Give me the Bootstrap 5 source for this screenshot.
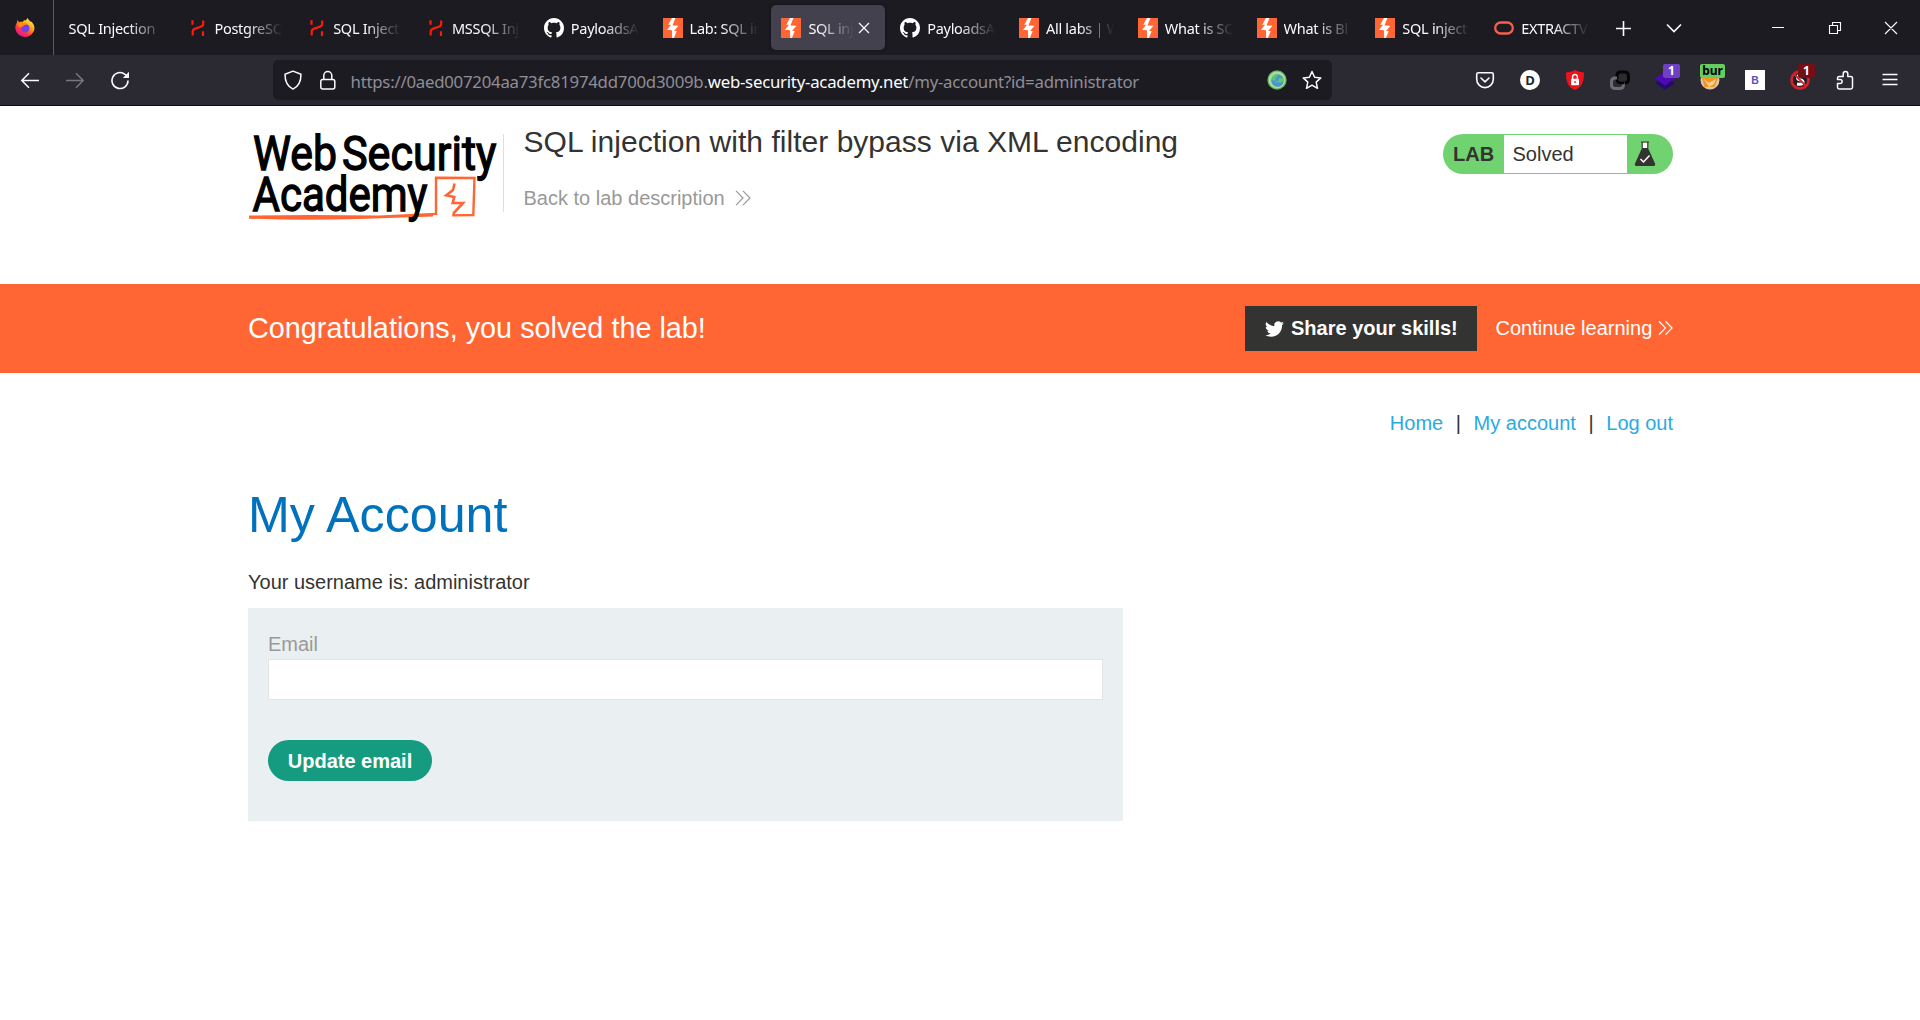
<!DOCTYPE html>
<html lang="en">
<head>
<meta charset="utf-8">
<title>SQL injection with filter bypass via XML encoding</title>
<link href="https://cdn.jsdelivr.net/npm/bootstrap@5.3.0/dist/css/bootstrap.min.css" rel="stylesheet">
<style>
body{font-family:"Liberation Sans",Arial,sans-serif;font-size:20px;line-height:24px;color:#333332;background:#fff;height:1020px;overflow:hidden}
svg{display:block;flex:none}
.chrome-ui{font-family:"Noto Sans","Open Sans",sans-serif;color:#fbfbfe}
.tabstrip{height:55px;background:#1c1b22}
.fx-button{width:54px;height:55px;border-right:1px solid #5b5a62;padding-left:15px}
.tabs-list{padding-left:4.6px;width:1548px}
.browser-tab{width:118.8px;flex:none}
.tab-inner{width:114px;height:45px;border-radius:5px;padding:0 10px;gap:7px}
.tab-inner.selected{background:#42414d;box-shadow:0 0 3px rgba(0,0,0,.5)}
.tab-label{font-size:14.5px;letter-spacing:-.28px;line-height:20px;overflow:hidden;white-space:nowrap;flex:1 1 0;margin-right:-1px;padding-top:1px;-webkit-mask-image:linear-gradient(to left,transparent,#000 36px);mask-image:linear-gradient(to left,transparent,#000 36px)}
.selected .tab-label{margin-right:-5px}
.tab-close{margin-right:3px}
.win-controls{padding-left:8px}
.toolbar-row{height:51px;background:#2b2a33;border-bottom:1px solid #0c0c0d;padding-left:20px}
.nav-icons{gap:25px;width:253px}
.urlbar{width:1059px;height:40px;border-radius:5px;background:#1c1b22;padding:0 10px}
.url-text{font-size:16.8px;letter-spacing:-.24px;color:#8f8e96;line-height:24px;padding:3px 0 0 13.5px;white-space:nowrap}
.url-text b{font-weight:400;color:#fbfbfe}
.star-icon{margin-left:15px}
.ext-icons{gap:25px;margin-left:143px}
.ext-badge{position:absolute;top:-6px;left:8px;width:17px;height:14px;border-radius:2px;font:700 12px/14px "Noto Sans",sans-serif;text-align:center;color:#fff}
.badge-violet{background:#6f3fc4}
.badge-maroon{background:#721016}
.badge-green{background:#66cd61;color:#000;width:25px;left:0}
.page-wrap{width:1425px;margin-left:248px}
.lab-header{height:178px;padding-top:17px}
.logo-box{width:256px;height:78px;margin-top:11px;border-right:1px solid #dedede}
.logo-box svg{overflow:visible}
.lab-title{font-size:30px;line-height:36px;font-weight:400;letter-spacing:.03px;margin:1px 0 0}
.lab-head-text{margin-left:19.5px}
.back-link{color:#999;margin-top:26px;gap:10px}
.lab-status{width:230px;height:40px;margin-top:11px;border-radius:20px;background:#70d36f;padding:1px 0 1px 10px;overflow:hidden}
.lab-status strong{width:51px}
.lab-state{width:123px;height:38px;background:#fff;padding-left:8.5px}
.flask{margin-left:7px}
.solved-banner{background:#ff6633;height:89px;color:#fff}
.banner-message{font-size:28.8px;line-height:36px;padding-bottom:2px}
.share-btn,.share-btn:hover{width:232px;height:45px;border-radius:0;background:#333332;color:#fff;font-size:20px;font-weight:700;line-height:24px;padding:0 0 1px 20px;gap:7px;border:0}
.continue-link{width:177.5px;margin-left:18.5px;padding-bottom:1px}
.top-links{padding-top:38px}
.top-links a{text-decoration:none;color:#29abe2}
.top-links span{padding:0 12.6px}
.acct-title{font-size:50.2px;line-height:60px;font-weight:400;color:#0071bc;margin:50px 0 25px}
.email-form{width:875px;height:213px;background:#eaeff2;padding:24px 20px;margin-top:14px}
.email-form label{color:#999;display:block;line-height:24px;margin-bottom:3px}
.email-form .form-control{height:41px;border-radius:0;border:1px solid #e4e4e4;padding:0}
.update-btn{margin-top:40px;width:164px;height:41px;border-radius:20.5px;background:#159c80;color:#fff;font-weight:700;font-size:20px;line-height:24px;padding:0;border:0}
</style>
<script src="https://cdn.jsdelivr.net/npm/bootstrap@5.3.0/dist/js/bootstrap.bundle.min.js"></script>
</head>
<body>
<svg width="0" height="0" class="position-absolute">
<defs>
<symbol id="hk" viewBox="0 0 20 20"><path d="M5.500 2.300v4.400M16.200 2.500v3.200q0 2.300-2.500 3l-5.400 1.900q-2.600.9-2.600 3v4M16 13.300v4.600" fill="none" stroke="#ff1a08" stroke-width="2.200"/></symbol>
<symbol id="gh" viewBox="0 0 16 16"><path fill="#fff" d="M8 0C3.580 0 0 3.580 0 8c0 3.540 2.290 6.530 5.470 7.590.4.070.55-.17.55-.38 0-.19-.01-.82-.01-1.490-2.010.37-2.530-.49-2.690-.94-.09-.23-.48-.94-.82-1.130-.28-.15-.68-.52-.01-.53.63-.01 1.080.58 1.230.82.72 1.210 1.870.87 2.330.66.07-.52.28-.87.51-1.070-1.780-.2-3.640-.89-3.640-3.950 0-.87.31-1.590.82-2.150-.08-.2-.36-1.020.08-2.120 0 0 .67-.21 2.200.82.64-.18 1.320-.27 2-.27s1.360.09 2 .27c1.530-1.040 2.200-.82 2.200-.82.44 1.100.16 1.920.08 2.120.51.56.82 1.270.82 2.150 0 3.070-1.870 3.750-3.650 3.950.29.25.54.73.54 1.480 0 1.070-.01 1.930-.01 2.200 0 .21.15.46.55.38A8.010 8.010 0 0 0 16 8c0-4.420-3.580-8-8-8z"/></symbol>
<symbol id="ps" viewBox="0 0 20 20"><path d="M0 0h20v20H0z" fill="#ff6633"/><path d="M9 0h3.400l-2.900 7.500 5.900.2-4.300 5.400h2.700L10.900 20H9.100v-6.500l-.6-1.600H4l4-5.200H5.200z" fill="#fff"/></symbol>
<symbol id="orc" viewBox="0 0 20 20"><rect x="1.200" y="4.500" width="17.600" height="11" rx="5.500" fill="none" stroke="#f4604c" stroke-width="2.300"/></symbol>
<symbol id="chev2" viewBox="0 0 16 16"><path d="M1 .8 8 8l-7 7.200M8 .8 15 8l-7 7.200" fill="none" stroke="currentColor" stroke-width="1.200"/></symbol>
</defs>
</svg>

<header class="chrome-ui">
  <div class="tabstrip d-flex align-items-center">
    <div class="fx-button d-flex align-items-center">
      <svg width="20" height="20" viewBox="0 0 20 20"><defs><linearGradient id="fx" x1=".85" y1=".1" x2=".25" y2=".95"><stop offset="0" stop-color="#fff44f"/><stop offset=".4" stop-color="#ff980e"/><stop offset=".7" stop-color="#ff3647"/><stop offset="1" stop-color="#e31587"/></linearGradient></defs><path d="M12.500 0c1 2 2.200 2.500 3.200 3.700 0 0 .8-.2 1.200.2.900 1.600 2.900 3.600 2.600 7A9.700 9.700 0 0 1 .3 10.500C.2 7.500 1.200 5.600 2 4.600L2.300 2l1.900 2.200c1-.5 2.300-.4 3.300-.3C9 2 10 2 10.800 2.600z" fill="url(#fx)"/><circle cx="10.300" cy="10.300" r="4.200" fill="#7542e5"/><path d="M3 6c1.500-1.700 4-1.500 5.200-.4 1.300-.6 3.500-.4 4.300.6L8.700 7.600C8 9.300 6 8.500 5.500 10 4 9 3 8 3 6z" fill="#ff8a16"/></svg>
    </div>
    <div class="tabs-list d-flex">
      <div class="browser-tab"><div class="tab-inner d-flex align-items-center"><span class="tab-label">SQL Injection</span></div></div>
      <div class="browser-tab"><div class="tab-inner d-flex align-items-center"><svg width="20" height="20"><use href="#hk"/></svg><span class="tab-label">PostgreSQL</span></div></div>
      <div class="browser-tab"><div class="tab-inner d-flex align-items-center"><svg width="20" height="20"><use href="#hk"/></svg><span class="tab-label">SQL Inject</span></div></div>
      <div class="browser-tab"><div class="tab-inner d-flex align-items-center"><svg width="20" height="20"><use href="#hk"/></svg><span class="tab-label">MSSQL Inj</span></div></div>
      <div class="browser-tab"><div class="tab-inner d-flex align-items-center"><svg width="20" height="20"><use href="#gh"/></svg><span class="tab-label">PayloadsA</span></div></div>
      <div class="browser-tab"><div class="tab-inner d-flex align-items-center"><svg width="20" height="20"><use href="#ps"/></svg><span class="tab-label">Lab: SQL in</span></div></div>
      <div class="browser-tab"><div class="tab-inner selected d-flex align-items-center"><svg width="20" height="20"><use href="#ps"/></svg><span class="tab-label">SQL inje</span><svg class="tab-close" width="16" height="16" viewBox="0 0 16 16"><path d="m3 3 10 10M13 3 3 13" stroke="#fbfbfe" stroke-width="1.300"/></svg></div></div>
      <div class="browser-tab"><div class="tab-inner d-flex align-items-center"><svg width="20" height="20"><use href="#gh"/></svg><span class="tab-label">PayloadsA</span></div></div>
      <div class="browser-tab"><div class="tab-inner d-flex align-items-center"><svg width="20" height="20"><use href="#ps"/></svg><span class="tab-label">All labs | W</span></div></div>
      <div class="browser-tab"><div class="tab-inner d-flex align-items-center"><svg width="20" height="20"><use href="#ps"/></svg><span class="tab-label">What is SQ</span></div></div>
      <div class="browser-tab"><div class="tab-inner d-flex align-items-center"><svg width="20" height="20"><use href="#ps"/></svg><span class="tab-label">What is Bl</span></div></div>
      <div class="browser-tab"><div class="tab-inner d-flex align-items-center"><svg width="20" height="20"><use href="#ps"/></svg><span class="tab-label">SQL inject</span></div></div>
      <div class="browser-tab"><div class="tab-inner d-flex align-items-center"><svg width="20" height="20"><use href="#orc"/></svg><span class="tab-label">EXTRACTV</span></div></div>
    </div>
    <div class="win-controls">
      <svg width="308" height="30" viewBox="1610 12 308 30" fill="none" stroke="#fbfbfe"><path d="M1616 27.500h15M1623.500 20v15M1667 23.500l7 7 7-7" stroke-width="1.600"/><path d="M1772 26.500h12M1829.500 24.500h8v8h-8zM1832.500 24.500v-3h8v8h-3M1885 21l12 12M1897 21l-12 12" stroke-width="1.100"/></svg>
    </div>
  </div>

  <div class="toolbar-row d-flex align-items-center">
    <div class="nav-icons d-flex align-items-center">
      <svg width="20" height="20" viewBox="0 0 20 20" fill="none" stroke="#fbfbfe" stroke-width="1.500"><path d="M2 10.500h17M9 3.300 1.800 10.500 9 17.700"/></svg>
      <svg width="20" height="20" viewBox="0 0 20 20" fill="none" stroke="#77767e" stroke-width="1.500"><path d="M1 10.500h17M11 3.300l7.200 7.200-7.200 7.200"/></svg>
      <svg width="20" height="20" viewBox="0 0 20 20" fill="none" stroke="#fbfbfe" stroke-width="1.600"><path d="M18 10.500a8 8 0 1 1-3-6.200L17.500 6.500"/><path d="M19 1.800v6.200h-6.200z" fill="#fbfbfe" stroke="none"/></svg>
    </div>
    <div class="urlbar d-flex align-items-center">
      <svg width="20" height="20" viewBox="0 0 20 20" fill="none" stroke="#fbfbfe" stroke-width="1.500"><path d="M10 1.100 18 4.200c0 7-2.500 12.300-8 14.900-5.500-2.600-8-7.900-8-14.900z" stroke-linejoin="round"/></svg>
      <svg class="ms-3" width="18" height="20" viewBox="0 0 18 20" fill="none" stroke="#fbfbfe" stroke-width="1.500"><rect x="1.800" y="9.500" width="14" height="9.500" rx="2"/><path d="M4.800 9.500v-4a4 4 0 0 1 8 0v4"/></svg>
      <div class="url-text flex-grow-1">https://0aed007204aa73fc81974dd700d3009b.<b>web-security-academy.net</b>/my-account?id=administrator</div>
      <svg width="20" height="20" viewBox="0 0 20 20"><circle cx="10" cy="10" r="9.700" fill="#5fae5b"/><circle cx="10" cy="10" r="8.500" fill="#a8dd9c"/><circle cx="10.500" cy="10.500" r="6.300" fill="#4c94cf"/><path d="M5 8q1-4 5-4l1 2-3 2 1 2-3 1zM12 8l4 0 .5 3-2.500 2-3-1-3 1 1-2 3-.5z" fill="#59c878"/></svg>
      <svg class="star-icon" width="20" height="20" viewBox="0 0 20 20" fill="none" stroke="#fbfbfe" stroke-width="1.500" stroke-linejoin="round"><path d="m10 1.500 2.600 5.700 6.200.7-4.600 4.200 1.300 6.200L10 15.200l-5.500 3.100 1.300-6.200L1.200 7.900l6.200-.7z"/></svg>
    </div>
    <div class="ext-icons d-flex align-items-center">
      <svg width="20" height="20" viewBox="0 0 20 20" fill="none" stroke="#fbfbfe" stroke-width="1.600" stroke-linecap="round" stroke-linejoin="round"><path d="M3.300 2.800h13.400q1.600 0 1.600 1.600v4.900a8.300 8.300 0 0 1-16.600 0V4.400q0-1.600 1.600-1.600z"/><path d="m6 8 4 3.800L14 8"/></svg>
      <svg width="20" height="20" viewBox="0 0 20 20"><circle cx="10" cy="10" r="10" fill="#fff"/><text x="10" y="14.700" text-anchor="middle" font-family="Open Sans" font-weight="700" font-size="13" fill="#24232b">D</text></svg>
      <svg width="20" height="20" viewBox="0 0 20 20"><path d="M10 0q4 2.200 9 2.500C19 11 17.500 17 10 20 2.500 17 1 11 1 2.500 6 2.200 10 0 10 0z" fill="#f0121a"/><rect x="6" y="8.800" width="8" height="6.500" rx="1" fill="#fff"/><path d="M7.600 9V7a2.400 2.400 0 0 1 4.800 0v2" fill="none" stroke="#fff" stroke-width="1.500"/><path d="M10 11v2" stroke="#f0121a" stroke-width="1.300"/></svg>
      <svg width="20" height="20" viewBox="0 0 20 20" fill="none" stroke-width="3"><path d="M7 9V5.500Q7 2 10.500 2h4Q18.500 2 18.500 6v3q0 4-4 4H13" stroke="#050505"/><path d="M7 8H5Q1.500 8 1.500 12v2.500q0 4 4 4h4q4 0 4-4V12" stroke="#6b6b70"/><path d="M7 9.500q0 3.500 4 3.500h3.500" stroke="#050505" stroke-width="2.500"/></svg>
      <div class="position-relative"><svg width="20" height="20" viewBox="0 0 20 20"><path d="m0 13 10 7 10-7-10-7z" fill="#240a70"/><path d="m0 8.500 10 7 10-7-10-7z" fill="#4b0bb0"/></svg><span class="ext-badge badge-violet">1</span></div>
      <div class="position-relative"><svg width="20" height="20" viewBox="0 0 20 20"><circle cx="10" cy="10" r="9.500" fill="#dcc5ae"/><path d="m2 8 2.500 9h10L18 8z" fill="#f6931e"/><path d="m4 9 5 4 7-4-2 5-5 3z" fill="#ffd29a"/></svg><span class="ext-badge badge-green">bur</span></div>
      <svg width="20" height="20" viewBox="0 0 20 20"><path d="M0 0h20v20H0z" fill="#fff"/><text x="10" y="14" text-anchor="middle" font-family="Liberation Sans" font-weight="700" font-size="10.500" fill="#5b50bd">B</text></svg>
      <div class="position-relative"><svg width="20" height="20" viewBox="0 0 20 20"><circle cx="10" cy="10" r="8.500" fill="#211e22" stroke="#d61f2c" stroke-width="2.800"/><path d="M13.500 5.500q-6-1-6 2 0 2 3 2.500t2.500 2.700q-.5 2.300-6 1.300" fill="none" stroke="#fff" stroke-width="3"/><path d="m4.500 4.500 11 11" stroke="#d61f2c" stroke-width="1.800"/></svg><span class="ext-badge badge-maroon">1</span></div>
      <svg width="20" height="20" viewBox="0 0 20 20" fill="none" stroke="#fbfbfe" stroke-width="1.500" stroke-linejoin="round"><path d="M2.500 13.500v3.800q0 1.700 1.700 1.700h11.600q1.700 0 1.700-1.700V8.200q0-1.700-1.700-1.700h-3V3.700a2.300 2.300 0 0 0-4.600 0v2.800H4.200q-1.700 0-1.700 1.700V9.500h2.600a2 2 0 0 1 0 4z"/></svg>
      <svg width="20" height="20" viewBox="0 0 20 20" stroke="#fbfbfe" stroke-width="1.300"><path d="M2.500 4.500h15M2.500 9.500h15M2.500 14.500h15"/></svg>
    </div>
  </div>
</header>

<section class="page-wrap lab-header d-flex">
  <div class="logo-box">
    <svg width="255" height="90" viewBox="248 134 255 90" font-family="Roboto" font-weight="400" font-size="47.500" fill="#000" stroke="#000" stroke-width="1.300">
      <path d="M249 216.700q60-.8 130 0l57-2.800V177.800l38.500.2-1.200 37-21 .4M249 217.500q50 1.800 110 .4l74-2.500" fill="none" stroke="#ff6633" stroke-width="2.400"/>
      <path d="m454.500 183.500-1.500 6.500-6.800 5.300 8 1.700-1.500 6h10.300l-9.200 10v2.500" fill="none" stroke="#ff6633" stroke-width="2.600"/>
      <text x="253" y="170" textLength="84" lengthAdjust="spacingAndGlyphs">Web</text>
      <text x="342" y="170" textLength="154.500" lengthAdjust="spacingAndGlyphs">Security</text>
      <text x="252.500" y="210.500" textLength="175" lengthAdjust="spacingAndGlyphs">Academy</text>
    </svg>
  </div>
  <div class="lab-head-text flex-grow-1">
    <h2 class="lab-title">SQL injection with filter bypass via XML encoding</h2>
    <div class="back-link d-flex align-items-center">Back to lab description <svg width="16" height="16"><use href="#chev2"/></svg></div>
  </div>
  <div class="lab-status d-flex align-items-center">
    <strong>LAB</strong>
    <div class="lab-state d-flex align-items-center">Solved</div>
    <svg class="flask" width="22" height="26" viewBox="0 0 22 26"><path d="M8 1.500h6V8H8z" fill="#fff"/><path d="M7 1h8M8.200 1v6M13.800 1v6" stroke="#333332" stroke-width="1.200" fill="none"/><path d="M8 7h6l7 15.500q.8 2.500-1.500 2.500h-17Q.3 25 1 22.500z" fill="#333332"/><path d="m6.500 18 3 3 6-6.500" fill="none" stroke="#fff" stroke-width="1.500"/></svg>
  </div>
</section>

<section class="solved-banner">
  <div class="page-wrap h-100 d-flex align-items-center">
    <div class="banner-message flex-grow-1">Congratulations, you solved the lab!</div>
    <button class="btn share-btn d-flex align-items-center"><svg width="19" height="17" viewBox="0 1 16 14"><path fill="#fff" d="M5.026 15c6.038 0 9.341-5.003 9.341-9.334 0-.14 0-.282-.006-.422A6.685 6.685 0 0 0 16 3.542a6.658 6.658 0 0 1-1.889.518 3.301 3.301 0 0 0 1.447-1.817 6.533 6.533 0 0 1-2.087.793A3.286 3.286 0 0 0 7.875 6.030a9.325 9.325 0 0 1-6.767-3.429 3.289 3.289 0 0 0 1.018 4.382A3.323 3.323 0 0 1 .64 6.575v.045a3.288 3.288 0 0 0 2.632 3.218 3.203 3.203 0 0 1-.865.115 3.230 3.230 0 0 1-.614-.057 3.283 3.283 0 0 0 3.067 2.277A6.588 6.588 0 0 1 .780 13.580a6.320 6.320 0 0 1-.780-.045A9.344 9.344 0 0 0 5.026 15z"/></svg>Share your skills!</button>
    <div class="continue-link d-flex align-items-center justify-content-between">Continue learning <svg width="15" height="16"><use href="#chev2"/></svg></div>
  </div>
</section>

<main class="page-wrap">
  <nav class="top-links d-flex justify-content-end">
    <a href="#">Home</a><span>|</span><a href="#">My account</a><span>|</span><a href="#">Log out</a>
  </nav>
  <h1 class="acct-title">My Account</h1>
  <div>Your username is: administrator</div>
  <form class="email-form">
    <label for="email">Email</label>
    <input id="email" type="email" class="form-control">
    <button type="button" class="btn update-btn">Update email</button>
  </form>
</main>
</body>
</html>
